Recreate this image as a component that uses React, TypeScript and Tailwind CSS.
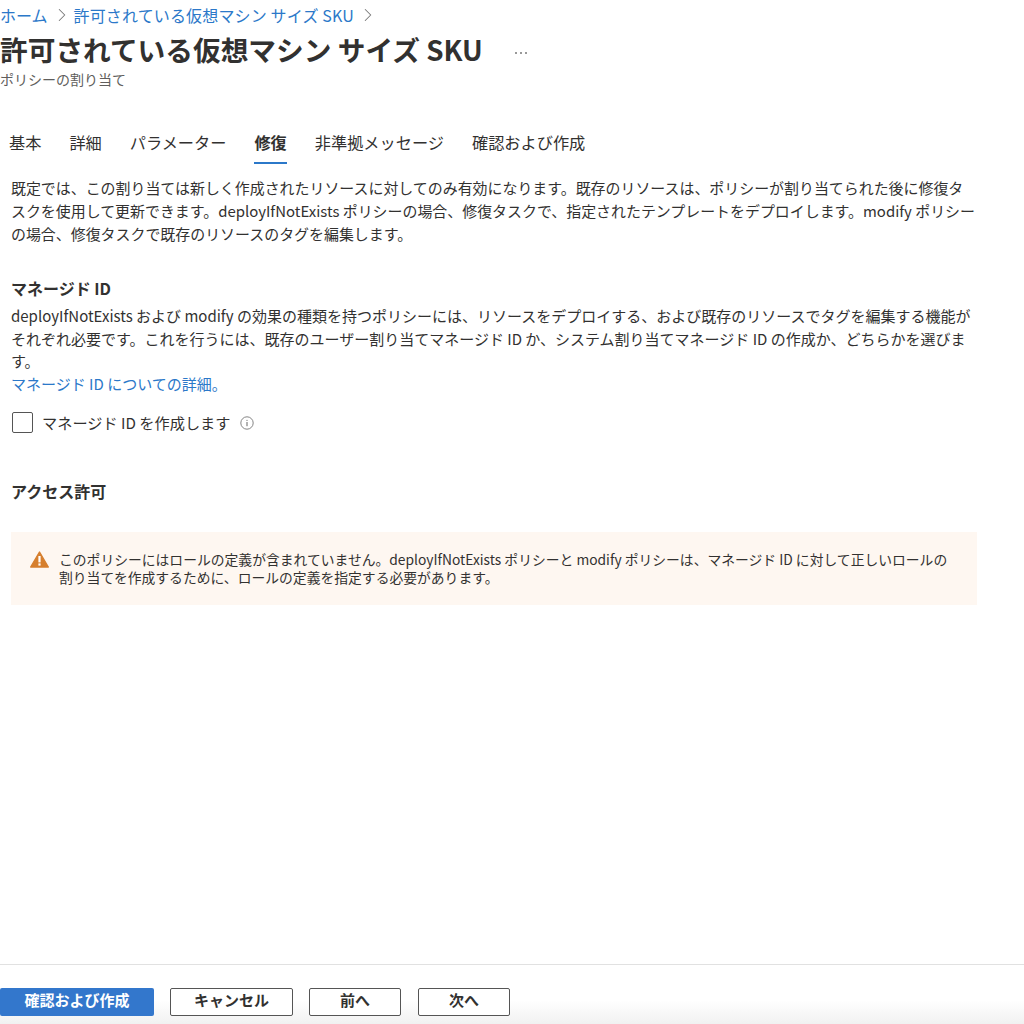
import { ChevronRight } from "lucide-react";

const font = "font-['Noto_Sans_CJK_JP','Noto_Sans',sans-serif]";

const tabs = ["基本", "詳細", "パラメーター", "修復", "非準拠メッセージ", "確認および作成"];

function WarningIcon() {
  return (
    <svg width="19" height="17" viewBox="0 0 19 17" className="shrink-0 -mt-[18px]">
      <path d="M9.5 1 L18.3 16 L0.7 16 Z" fill="#d67f2e" stroke="#d67f2e" strokeWidth="1.4" strokeLinejoin="round" />
      <rect x="8.4" y="5" width="2.2" height="6.4" fill="#fff" />
      <rect x="8.4" y="12.4" width="2.2" height="2.2" fill="#fff" />
    </svg>
  );
}

function InfoIcon() {
  return (
    <svg width="14" height="14" viewBox="0 0 14 14" className="shrink-0">
      <circle cx="7" cy="7" r="6.2" fill="none" stroke="#777" strokeWidth="0.9" />
      <rect x="6.5" y="6" width="1" height="4.2" fill="#666" />
      <rect x="6.5" y="3.9" width="1" height="1" fill="#666" />
    </svg>
  );
}

export default function App() {
  return (
    <div className={`${font} w-[1024px] h-[1024px] bg-white flex flex-col text-[#323130] overflow-hidden`}>
      <div className="flex-1 min-h-0">
        {/* breadcrumb */}
        <div className="flex items-center h-[16px] mt-[7px] text-[16px] text-[#2b78c9]">
          <span>ホーム</span>
          <ChevronRight className="w-[22px] h-[22px] ml-[3px] mr-[1px] text-[#777]" strokeWidth={1.1} />
          <span className="tracking-[0.15px]">許可されている仮想マシン サイズ SKU</span>
          <ChevronRight className="w-[22px] h-[22px] ml-[3px] text-[#777]" strokeWidth={1.1} />
        </div>

        {/* title */}
        <div className="flex items-center mt-[6px] h-[42px]">
          <h1 className="text-[27.7px] font-bold text-[#323130] whitespace-nowrap">許可されている仮想マシン サイズ SKU</h1>
          <div className="flex gap-[3px] ml-[32px] mt-[5px]">
            <span className="w-[2px] h-[2px] rounded-full bg-[#777]" />
            <span className="w-[2px] h-[2px] rounded-full bg-[#777]" />
            <span className="w-[2px] h-[2px] rounded-full bg-[#777]" />
          </div>
        </div>
        <p className="text-[14px] leading-[18px] text-[#605e5c] -mt-px">ポリシーの割り当て</p>

        {/* tabs */}
        <div className="flex gap-[28px] ml-[9px] mt-[43px] text-[16.2px] leading-[22px]">
          {tabs.map((t) => (
            <div key={t} className={t === "修復" ? "font-bold relative pb-[9px] border-b-2 border-[#2b78c9]" : "pb-[9px]"}>
              {t}
            </div>
          ))}
        </div>

        <div className="ml-[11px] w-[966px]">
          <p className="mt-[12px] text-[14.95px] leading-[23px]">
            既定では、この割り当ては新しく作成されたリソースに対してのみ有効になります。既存のリソースは、ポリシーが割り当てられた後に修復タスクを使用して更新できます。deployIfNotExists ポリシーの場合、修復タスクで、指定されたテンプレートをデプロイします。modify ポリシーの場合、修復タスクで既存のリソースのタグを編集します。
          </p>

          <h2 className="mt-[32px] text-[16px] leading-[22px] font-bold">マネージド ID</h2>
          <p className="mt-[6px] text-[15px] leading-[22.7px]">
            deployIfNotExists および modify の効果の種類を持つポリシーには、リソースをデプロイする、および既存のリソースでタグを編集する機能がそれぞれ必要です。これを行うには、既存のユーザー割り当てマネージド ID か、システム割り当てマネージド ID の作成か、どちらかを選びます。
          </p>
          <a className="block text-[15px] leading-[22.7px] text-[#2b78c9]">マネージド ID についての詳細。</a>

          <div className="flex items-center mt-[16px] h-[22px]">
            <div className="w-[21px] h-[21px] ml-px border border-[#555] rounded-[2px]" />
            <span className="ml-[9px] text-[15.2px]">マネージド ID を作成します</span>
            <span className="ml-[10px]"><InfoIcon /></span>
          </div>

          <h2 className="mt-[46px] text-[16px] leading-[22px] font-bold">アクセス許可</h2>

          <div className="mt-[30px] h-[73px] bg-[#fef7f1] flex items-center pl-[19px] pr-[20px] gap-[10px]">
            <WarningIcon />
            <p className="text-[13.8px] leading-[18px]">
              このポリシーにはロールの定義が含まれていません。deployIfNotExists ポリシーと modify ポリシーは、マネージド ID に対して正しいロールの割り当てを作成するために、ロールの定義を指定する必要があります。
            </p>
          </div>
        </div>
      </div>

      {/* footer */}
      <div className="h-[60px] border-t border-[#e1e1e1] bg-gradient-to-b from-white from-60% to-[#f1f1f1] flex gap-[16px] pt-[23px]">
        <button className="w-[154px] h-[28px] pb-[3px] bg-[#3377cc] rounded-[2px] text-white text-[15px] font-bold">確認および作成</button>
        <button className="w-[123px] h-[28px] pb-[3px] border border-[#555] rounded-[2px] bg-white text-[15px] font-bold">キャンセル</button>
        <button className="w-[92px] h-[28px] pb-[3px] border border-[#555] rounded-[2px] bg-white text-[15px] font-bold">前へ</button>
        <button className="w-[92px] h-[28px] ml-px pb-[3px] border border-[#555] rounded-[2px] bg-white text-[15px] font-bold">次へ</button>
      </div>
    </div>
  );
}
